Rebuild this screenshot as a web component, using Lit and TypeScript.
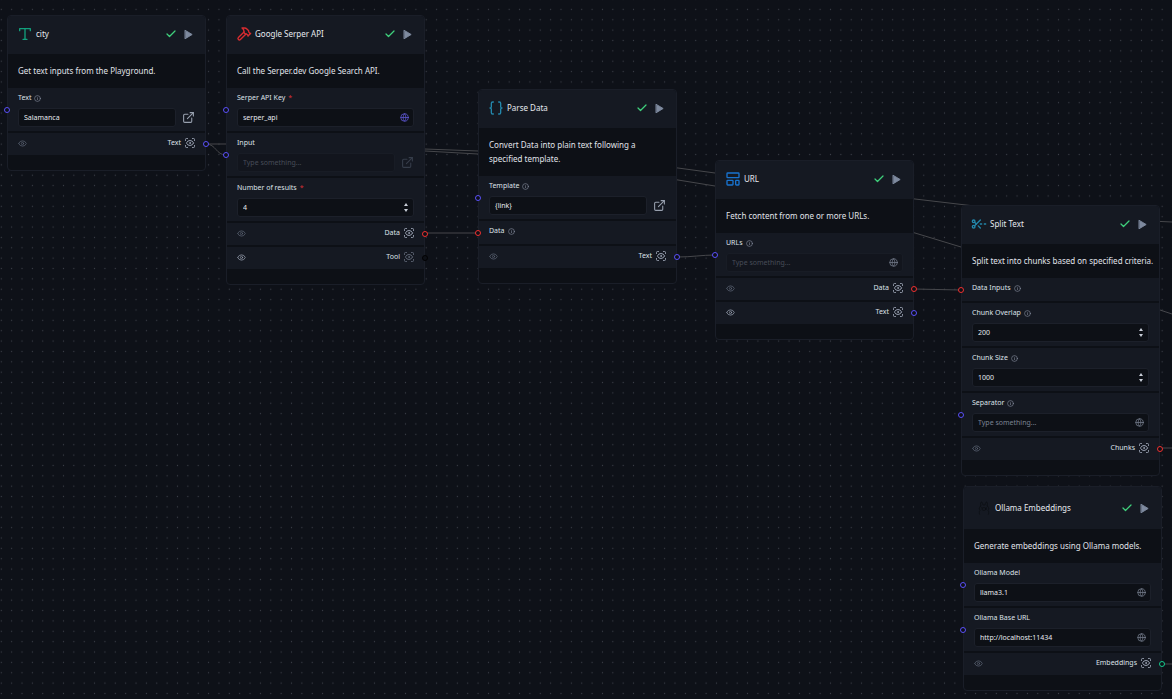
import { LitElement, html, svg, css, nothing, TemplateResult } from "lit";
import { customElement, property } from "lit/decorators.js";
import { classMap } from "lit/directives/class-map.js";
import { styleMap } from "lit/directives/style-map.js";

type Tone = "indigo" | "red" | "black" | "green";

interface Field {
  kind: "text" | "number" | "port";
  label: string;
  value?: string;
  info?: boolean;
  required?: boolean;
  disabled?: boolean;
  handle?: Tone;
  action?: "expand" | "globe" | "globe-active";
}

interface Output {
  label: string;
  handle: Tone;
  lit?: boolean;
  dimScan?: boolean;
}

interface FlowNode {
  id: string;
  title: string;
  icon: string;
  x: number;
  y: number;
  tall?: boolean;
  description: string;
  fields: Field[];
  outputs: Output[];
}

const shapes: Record<string, TemplateResult> = {
  type: svg`<path d="M4 7V4h16v3M9 20h6M12 4v16"/>`,
  hammer: svg`<path d="m15 12-8.373 8.373a1 1 0 1 1-3-3L12 9"/><path d="m18 15 4-4"/><path d="m21.5 11.5-1.914-1.914A2 2 0 0 1 19 8.172V7l-2.26-2.26a6 6 0 0 0-4.202-1.756L9 2.96l.92.82A6.18 6.18 0 0 1 12 8.4V10l2 2h1.172a2 2 0 0 1 1.414.586L18.5 14.5"/>`,
  braces: svg`<path d="M8 3H7a2 2 0 0 0-2 2v5a2 2 0 0 1-2 2 2 2 0 0 1 2 2v5c0 1.1.9 2 2 2h1"/><path d="M16 21h1a2 2 0 0 0 2-2v-5c0-1.1.9-2 2-2a2 2 0 0 1-2-2V5a2 2 0 0 0-2-2h-1"/>`,
  layout: svg`<rect x="3" y="3" width="18" height="7" rx="1"/><rect x="3" y="14" width="9" height="7" rx="1"/><rect x="16" y="14" width="5" height="7" rx="1"/>`,
  scissors: svg`<path d="M5.42 9.42 8 12"/><circle cx="4" cy="8" r="2"/><path d="m14 6-8.58 8.58"/><circle cx="4" cy="16" r="2"/><path d="M10.8 14.8 14 18"/><path d="M16 12h-2"/><path d="M22 12h-2"/>`,
  ollama: svg`<path d="M7 9V4.500c0-2 2.500-2 3 1l.4 2h3.200l.4-2c.5-3 3-3 3-1V9"/><path d="M7 9c-2.500 2-2.500 4.500-1 6.500-1.500 2-1 4-.5 6M17 9c2.500 2 2.500 4.500 1 6.500 1.500 2 1 4 .5 6"/><ellipse cx="12" cy="13.500" rx="3" ry="2.200"/><path d="M8.500 11.500h.1M15.500 11.500h.1"/>`,
  check: svg`<path d="M20 6 9 17l-5-5"/>`,
  play: svg`<path d="M5 3l15 9-15 9z" fill="currentColor"/>`,
  info: svg`<circle cx="12" cy="12" r="10"/><path d="M12 16v-4M12 8h.01"/>`,
  expand: svg`<path d="M15 3h6v6"/><path d="M10 14 21 3"/><path d="M18 13v6a2 2 0 0 1-2 2H5a2 2 0 0 1-2-2V8a2 2 0 0 1 2-2h6"/>`,
  globe: svg`<circle cx="12" cy="12" r="10"/><path d="M12 2a14.500 14.500 0 0 0 0 20 14.500 14.500 0 0 0 0-20"/><path d="M2 12h20"/>`,
  eye: svg`<path d="M2.062 12.348a1 1 0 0 1 0-.696 10.750 10.750 0 0 1 19.876 0 1 1 0 0 1 0 .696 10.750 10.750 0 0 1-19.876 0"/><circle cx="12" cy="12" r="3"/>`,
  scan: svg`<path d="M3 7V5a2 2 0 0 1 2-2h2"/><path d="M17 3h2a2 2 0 0 1 2 2v2"/><path d="M21 17v2a2 2 0 0 1-2 2h-2"/><path d="M7 21H5a2 2 0 0 1-2-2v-2"/><circle cx="12" cy="12" r="1"/><path d="M18.944 12.330a1 1 0 0 0 0-.66 7.500 7.500 0 0 0-13.888 0 1 1 0 0 0 0 .66 7.500 7.500 0 0 0 13.888 0"/>`,
};

const icon = (name: string, cls: string) => html`
  <svg class="icon ${cls}" viewBox="0 0 24 24" aria-hidden="true">${shapes[name]}</svg>
`;

const nodes: FlowNode[] = [
  {
    id: "city", title: "city", icon: "type", x: 7, y: 15,
    description: "Get text inputs from the Playground.",
    fields: [{ kind: "text", label: "Text", info: true, value: "Salamanca", handle: "indigo", action: "expand" }],
    outputs: [{ label: "Text", handle: "indigo" }],
  },
  {
    id: "serper", title: "Google Serper API", icon: "hammer", x: 226, y: 15,
    description: "Call the Serper.dev Google Search API.",
    fields: [
      { kind: "text", label: "Serper API Key", required: true, value: "serper_api", handle: "indigo", action: "globe-active" },
      { kind: "text", label: "Input", disabled: true, handle: "indigo", action: "expand" },
      { kind: "number", label: "Number of results", required: true, value: "4" },
    ],
    outputs: [
      { label: "Data", handle: "red" },
      { label: "Tool", handle: "black", lit: true, dimScan: true },
    ],
  },
  {
    id: "parse", title: "Parse Data", icon: "braces", x: 478, y: 89,
    description: "Convert Data into plain text following a\nspecified template.",
    fields: [
      { kind: "text", label: "Template", info: true, value: "{link}", handle: "indigo", action: "expand" },
      { kind: "port", label: "Data", info: true, handle: "red" },
    ],
    outputs: [{ label: "Text", handle: "indigo" }],
  },
  {
    id: "url", title: "URL", icon: "layout", x: 715, y: 160,
    description: "Fetch content from one or more URLs.",
    fields: [{ kind: "text", label: "URLs", info: true, disabled: true, handle: "indigo", action: "globe" }],
    outputs: [
      { label: "Data", handle: "red" },
      { label: "Text", handle: "indigo", lit: true },
    ],
  },
  {
    id: "split", title: "Split Text", icon: "scissors", x: 961, y: 205,
    description: "Split text into chunks based on specified criteria.",
    fields: [
      { kind: "port", label: "Data Inputs", info: true, handle: "red" },
      { kind: "number", label: "Chunk Overlap", info: true, value: "200" },
      { kind: "number", label: "Chunk Size", info: true, value: "1000" },
      { kind: "text", label: "Separator", info: true, handle: "indigo", action: "globe" },
    ],
    outputs: [{ label: "Chunks", handle: "red" }],
  },
  {
    id: "ollama", title: "Ollama Embeddings", icon: "ollama", x: 963, y: 486, tall: true,
    description: "Generate embeddings using Ollama models.",
    fields: [
      { kind: "text", label: "Ollama Model", value: "llama3.1", handle: "indigo", action: "globe" },
      { kind: "text", label: "Ollama Base URL", value: "http://localhost:11434", handle: "indigo", action: "globe" },
    ],
    outputs: [{ label: "Embeddings", handle: "green" }],
  },
];

const edges = [
  "M206 144H226C300 144 360 146 425 149L478 151C550 155 610 159 678 168L715 173L915 199L966 205C1040 214 1100 219 1172 222",
  "M206 144C216 144 216 155 226 155",
  "M226 144C300 144 360 147 425 151L478 154C550 158 610 168 678 180L715 186L915 233L961 247L1160 310L1172 314",
  "M425 233H478",
  "M678 257C692 257 702 255 715 255",
  "M914 289L961 290",
  "M1160 448H1172",
  "M1162 664H1172",
];

@customElement("flow-node")
export class FlowNodeElement extends LitElement {
  @property({ attribute: false }) node!: FlowNode;

  static styles = css`
    :host {
      display: block;
      width: 199px;
      box-sizing: border-box;
      border: 1px solid #1a1e28;
      border-radius: 4px;
      background: #0d1016;
      color: #dde1e8;
      font: 7px/12px "Noto Sans", "Open Sans", sans-serif;
    }
    .icon {
      display: block;
      flex: none;
      fill: none;
      stroke: currentColor;
      stroke-width: 2;
      stroke-linecap: round;
      stroke-linejoin: round;
    }
    button {
      display: block;
      flex: none;
      margin: 0;
      padding: 0;
      border: 0;
      background: none;
      color: inherit;
      font: inherit;
    }
    .head {
      display: flex;
      align-items: center;
      gap: 3px;
      height: 38px;
      box-sizing: border-box;
      padding: 0 11px 2px 9px;
      border-radius: 3px 3px 0 0;
      background: #151922;
    }
    .head.tall { height: 42px; padding: 0 11px 0 12px; }
    .glyph { width: 16px; height: 16px; }
    .type { color: #12a07c; }
    .hammer { color: #d92c30; }
    .braces { color: #2387ab; }
    .layout { color: #1873cf; }
    .scissors { color: #2387ab; }
    .ollama { color: #0b0d11; stroke-width: 1; }
    .title {
      flex: 1;
      margin: 0;
      font-size: 8px;
      line-height: 14px;
      font-weight: 400;
      color: #e6e9ef;
    }
    .check { width: 12px; height: 12px; color: #3fd07c; stroke-width: 2.5; }
    .play { width: 11px; height: 11px; color: #7e8a9f; }
    .run { margin-left: 3px; }
    .about {
      margin: 0;
      padding: 10px 4px 10px 10px;
      font-size: 8px;
      line-height: 14px;
      color: #e0e3ea;
      white-space: pre-line;
    }
    .rows { display: flex; flex-direction: column; gap: 2px; }
    .row { position: relative; padding: 4px 10px; background: #151922; }
    .row.port { padding-bottom: 7px; }
    .caption { display: flex; align-items: center; gap: 3px; height: 12px; }
    .star { color: #dc2f36; }
    .info { width: 7px; height: 7px; color: #8b93a3; }
    .line { display: flex; align-items: center; gap: 6px; margin-top: 4px; }
    .box {
      flex: 1;
      min-width: 0;
      display: flex;
      align-items: center;
      height: 19px;
      box-sizing: border-box;
      padding: 0 4px 0 5px;
      border: 1px solid #1c202a;
      border-radius: 3px;
      background: #0d1016;
    }
    .box.disabled { background: #12151d; border-color: #181c25; }
    input {
      flex: 1;
      min-width: 0;
      margin: 0;
      padding: 0;
      border: 0;
      outline: 0;
      background: none;
      color: #e6e9ef;
      font: 7px/12px "Noto Sans", "Open Sans", sans-serif;
      appearance: textfield;
    }
    input::-webkit-inner-spin-button { appearance: none; margin: 0; }
    input::placeholder { color: #7b8393; opacity: 1; }
    .disabled input::placeholder { color: #474c58; }
    .expand { width: 13px; height: 13px; color: #98a0ae; }
    .expand.off { color: #363d4a; }
    .globe { width: 9px; height: 9px; color: #767e8d; }
    .globe.active { color: #6059d8; }
    .step { display: flex; flex-direction: column; gap: 3px; padding-right: 1px; }
    .arrow { width: 4px; height: 3px; display: block; fill: #c9ced8; }
    .out {
      position: relative;
      display: flex;
      align-items: center;
      justify-content: space-between;
      height: 22px;
      box-sizing: border-box;
      padding: 0 9px 2px 10px;
      background: #151922;
    }
    .side { display: flex; align-items: center; gap: 3px; }
    .eye { width: 9px; height: 9px; color: #5a6272; }
    .eye.lit { color: #969eae; }
    .scan { width: 12px; height: 12px; color: #969eae; }
    .scan.dim { color: #5d6473; }
    .foot { height: 15px; }
    .handle {
      position: absolute;
      top: 50%;
      width: 6px;
      height: 6px;
      box-sizing: border-box;
      border: 1px solid;
      border-radius: 50%;
      background: #0d1016;
      transform: translateY(-50%);
    }
    .handle.in { left: -4px; }
    .handle.outgoing { right: -4px; }
    .indigo { border-color: #5b50fa; }
    .red { border-color: #f03030; }
    .black { border-color: #020203; }
    .green { border-color: #14cb8e; }
  `;

  private field(f: Field, i: number) {
    const id = `${this.node.id}-${i}`;
    const mark = html`
      ${f.info ? icon("info", "info") : nothing}
      ${f.required ? html`<span class="star">*</span>` : nothing}
    `;
    const handle = f.handle ? html`<span class="handle in ${f.handle}"></span>` : nothing;
    if (f.kind === "port") {
      return html`<div class="row port">${handle}<div class="caption"><span>${f.label}</span>${mark}</div></div>`;
    }
    const globe = f.action === "globe" || f.action === "globe-active";
    return html`
      <div class="row">
        ${handle}
        <div class="caption"><label for=${id}>${f.label}</label>${mark}</div>
        <div class="line">
          <div class=${classMap({ box: true, disabled: !!f.disabled })}>
            <input
              id=${id}
              type=${f.kind}
              .value=${f.value ?? ""}
              placeholder="Type something..."
              autocomplete="off"
              ?disabled=${!!f.disabled}
            />
            ${globe
              ? html`<button aria-label="Global variable">${icon("globe", f.action === "globe-active" ? "globe active" : "globe")}</button>`
              : nothing}
            ${f.kind === "number"
              ? html`<div class="step">
                  <button aria-label="Increase"><svg class="arrow" viewBox="0 0 4 3"><path d="M2 0 4 3H0z" /></svg></button>
                  <button aria-label="Decrease"><svg class="arrow" viewBox="0 0 4 3"><path d="M0 0h4L2 3z" /></svg></button>
                </div>`
              : nothing}
          </div>
          ${f.action === "expand"
            ? html`<button aria-label="Open editor">${icon("expand", f.disabled ? "expand off" : "expand")}</button>`
            : nothing}
        </div>
      </div>
    `;
  }

  private output(o: Output) {
    return html`
      <div class="out">
        <button aria-label="Hide output">${icon("eye", o.lit ? "eye lit" : "eye")}</button>
        <div class="side">
          <span>${o.label}</span>
          <button aria-label="Inspect output">${icon("scan", o.dimScan ? "scan dim" : "scan")}</button>
        </div>
        <span class="handle outgoing ${o.handle}"></span>
      </div>
    `;
  }

  render() {
    const n = this.node;
    return html`
      <header class=${classMap({ head: true, tall: !!n.tall })}>
        ${icon(n.icon, `glyph ${n.icon}`)}
        <h2 class="title">${n.title}</h2>
        ${icon("check", "check")}
        <button class="run" aria-label="Run">${icon("play", "play")}</button>
      </header>
      <p class="about">${n.description}</p>
      <div class="rows">
        ${n.fields.map((f, i) => this.field(f, i))}
        ${n.outputs.map((o) => this.output(o))}
      </div>
      <div class="foot"></div>
    `;
  }
}

@customElement("app-root")
export class AppRoot extends LitElement {
  static styles = css`
    :host {
      display: block;
      position: relative;
      min-height: 100vh;
      overflow: hidden;
      background: #0e1118;
    }
    .canvas {
      position: absolute;
      inset: 0;
      width: 100%;
      height: 100%;
    }
    .dot { fill: #3c4049; }
    .edge { fill: none; stroke: #46474b; stroke-width: 1; }
    .placed { position: absolute; }
  `;

  render() {
    return html`
      <svg class="canvas" aria-hidden="true">
        <defs>
          <pattern id="grid" x="-3.900" y="4.200" width="10.365" height="10.365" patternUnits="userSpaceOnUse">
            <circle class="dot" cx="5.180" cy="5.180" r="0.600" />
          </pattern>
        </defs>
        <rect width="100%" height="100%" fill="url(#grid)" />
        ${edges.map((d) => svg`<path class="edge" d=${d} />`)}
      </svg>
      ${nodes.map(
        (n) => html`<flow-node class="placed" style=${styleMap({ left: `${n.x}px`, top: `${n.y}px` })} .node=${n}></flow-node>`
      )}
    `;
  }
}
